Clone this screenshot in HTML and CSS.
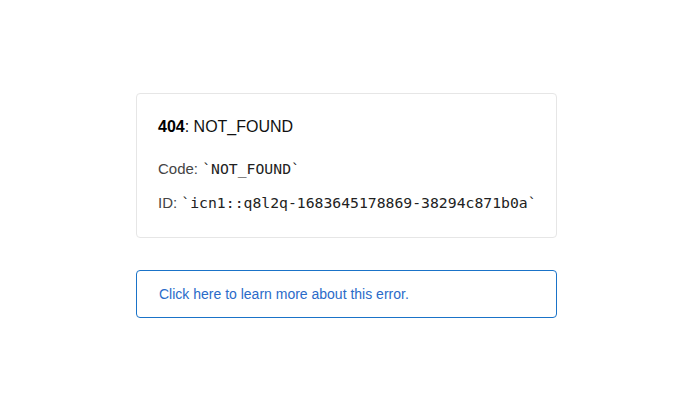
FILE: index.html
```html
<!DOCTYPE html>
<html>
<head>
<meta charset="utf-8">
<link rel="stylesheet" href="styles.css">
</head>
<body>
<main class="page">
  <section class="card">
    <p class="title"><strong>404</strong>: NOT_FOUND</p>
    <p class="line">Code: <code>`NOT_FOUND`</code></p>
    <p class="line">ID: <code>`icn1::q8l2q-1683645178869-38294c871b0a`</code></p>
  </section>
  <a class="more" href="#">Click here to learn more about this error.</a>
</main>
</body>
</html>
```
FILE: styles.css
```css
html, body {
  margin: 0;
  background: #fff;
}
body {
  font-family: "Liberation Sans", Arial, sans-serif;
  color: #333;
}
.page {
  display: flex;
  flex-direction: column;
  gap: 32px;
  width: 421px;
  padding: 93px 0 0 136px;
}
.card {
  box-sizing: border-box;
  border: 1px solid #e6e6e6;
  border-radius: 4px;
  padding: 23px 21px 25px;
  display: flex;
  flex-direction: column;
  gap: 15px;
}
.card p {
  margin: 0;
}
.title {
  font-size: 16px;
  line-height: 20px;
  color: #111;
  margin-bottom: 7px !important;
}
.title strong {
  color: #000;
}
.line {
  font-size: 15px;
  line-height: 19px;
  color: #444;
  white-space: nowrap;
}
.line code {
  font-family: "DejaVu Sans Mono", "Liberation Mono", monospace;
  font-size: 14.75px;
  color: #222;
}
.more {
  box-sizing: border-box;
  display: block;
  height: 48px;
  border: 1px solid #1a73c8;
  border-radius: 4px;
  padding: 15px 22px;
  font-size: 14px;
  line-height: 17px;
  color: #2a6bc9;
  text-decoration: none;
}
```
